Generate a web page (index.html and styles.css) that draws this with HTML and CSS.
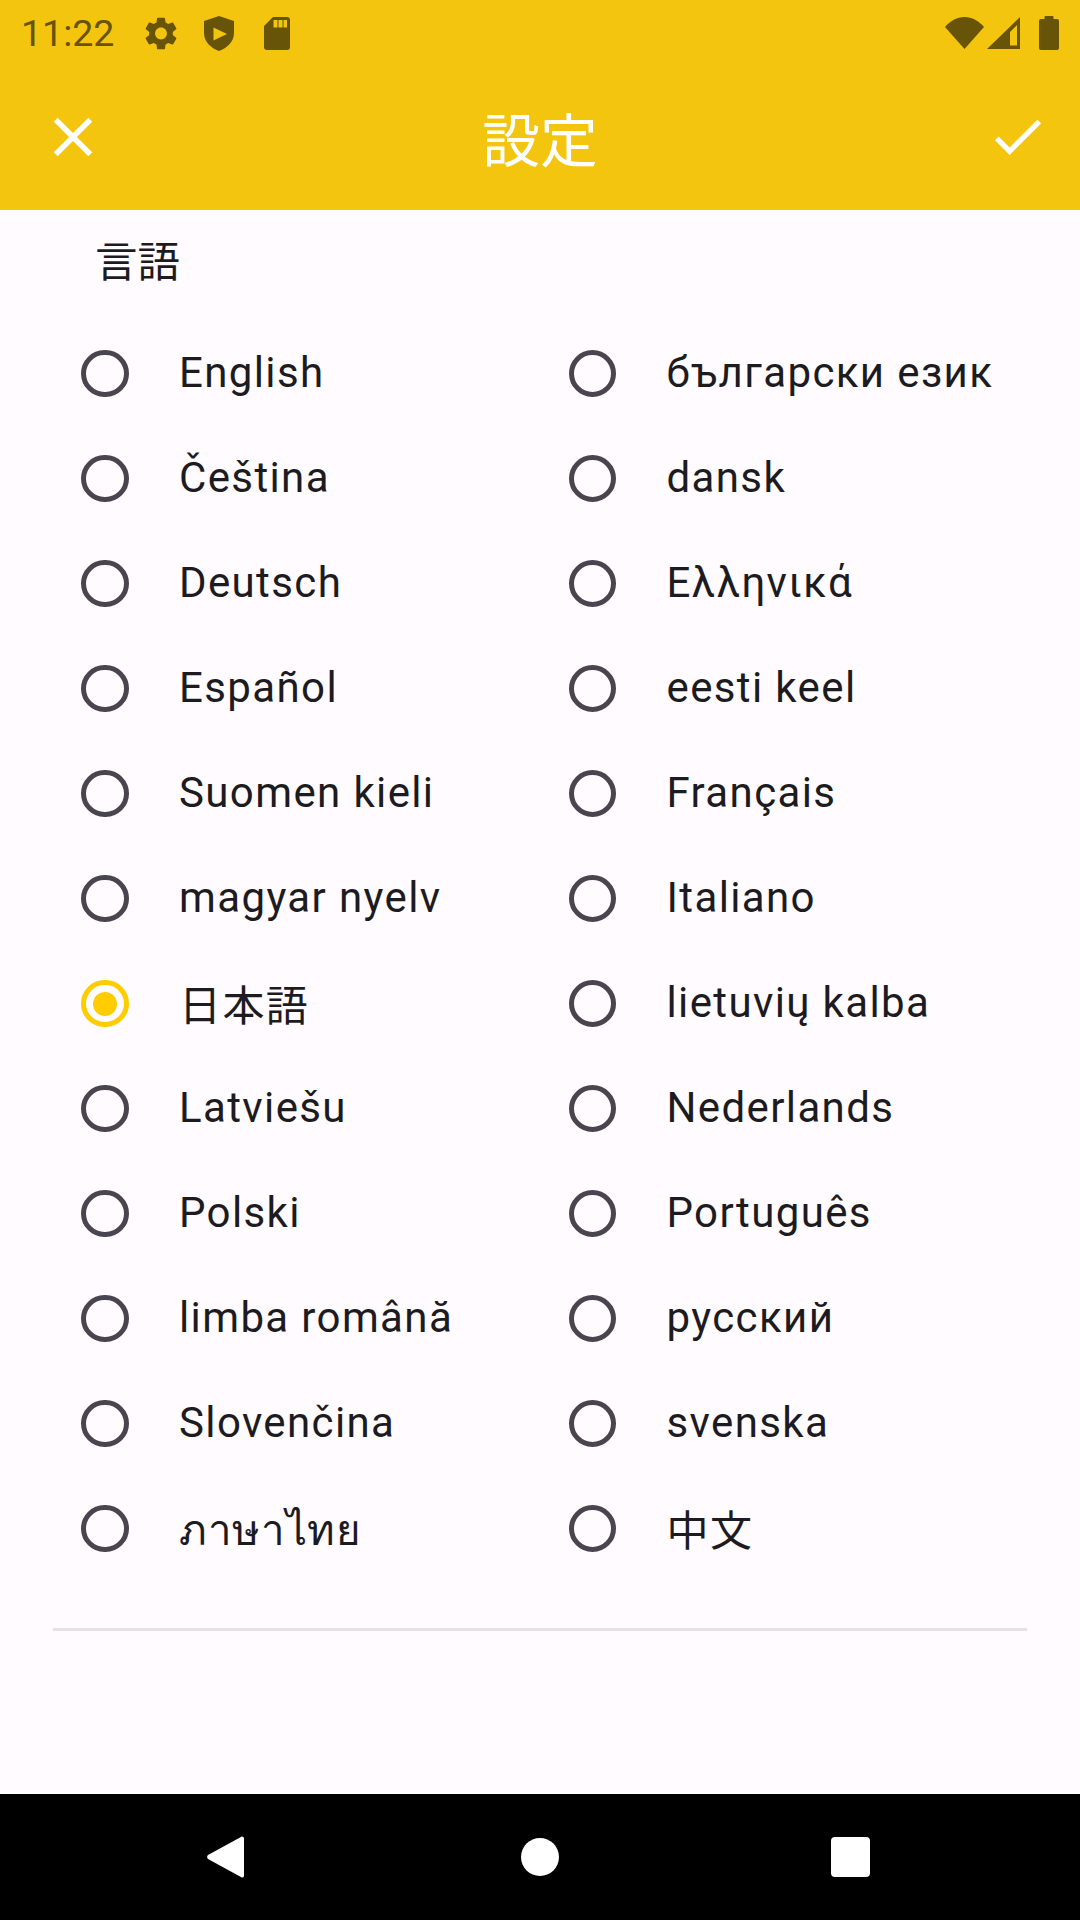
FILE: index.html
```html
<!DOCTYPE html>
<html lang="ja">
<head>
<meta charset="utf-8">
<title>設定</title>
<link rel="stylesheet" href="styles.css">
</head>
<body>
<div class="screen">
  <div class="status">
    <span class="time">11:22</span>
    <svg class="ic-gear" viewBox="2.6 2 18.8 20"><path d="M19.14 12.94c.04-.3.06-.61.06-.94 0-.32-.02-.64-.07-.94l2.03-1.58c.18-.14.23-.41.12-.61l-1.92-3.32c-.12-.22-.37-.29-.59-.22l-2.39.96c-.5-.38-1.03-.7-1.62-.94l-.36-2.54c-.04-.24-.24-.41-.48-.41h-3.84c-.24 0-.43.17-.47.41l-.36 2.54c-.59.24-1.13.57-1.62.94l-2.39-.96c-.22-.08-.47 0-.59.22L2.74 8.87c-.12.21-.08.47.12.61l2.03 1.58c-.05.3-.09.63-.09.94s.02.64.07.94l-2.03 1.58c-.18.14-.23.41-.12.61l1.92 3.32c.12.22.37.29.59.22l2.39-.96c.5.38 1.03.7 1.62.94l.36 2.54c.05.24.24.41.48.41h3.84c.24 0 .44-.17.47-.41l.36-2.54c.59-.24 1.13-.56 1.62-.94l2.39.96c.22.08.47 0 .59-.22l1.92-3.32c.12-.22.07-.47-.12-.61l-2.01-1.58zM12 15.6c-1.98 0-3.6-1.62-3.6-3.6s1.62-3.6 3.6-3.6 3.6 1.62 3.6 3.6-1.62 3.6-3.6 3.6z"/></svg>
    <svg class="ic-shield" viewBox="0 0 30 35"><path fill-rule="evenodd" d="M15 0L30 5V17C30 26 23 32 15 35C7 32 0 26 0 17V5ZM9.5 11.5V24.5L23 18Z"/></svg>
    <svg class="ic-sd" viewBox="0 0 26 33"><path fill-rule="evenodd" d="M9 0H23a3 3 0 0 1 3 3V30a3 3 0 0 1-3 3H3a3 3 0 0 1-3-3V9ZM9.5 3V10.5H13.5V3ZM14.5 3V10.5H18.5V3ZM19.5 3V10.5H23V3Z"/></svg>
    <span class="spacer"></span>
    <svg class="ic-wifi" viewBox="0 0 39 32"><path d="M0 10C5 4 12 0 19.5 0C27 0 34 4 39 10L19.5 32Z"/></svg>
    <svg class="ic-signal" viewBox="0 0 33 32"><path fill-rule="evenodd" d="M0 32L33 0V32ZM23 15V28.5H30V8Z"/></svg>
    <svg class="ic-battery" viewBox="0 0 20 34"><path d="M5.5 3V1a1 1 0 0 1 1-1h7a1 1 0 0 1 1 1V3H18a2 2 0 0 1 2 2V32a2 2 0 0 1-2 2H2a2 2 0 0 1-2-2V5a2 2 0 0 1 2-2Z"/></svg>
  </div>
  <header class="appbar">
    <svg class="bar-icon" viewBox="0 0 24 24"><path d="M19 6.41L17.59 5 12 10.59 6.41 5 5 6.41 10.59 12 5 17.59 6.41 19 12 13.41 17.59 19 19 17.59 13.41 12z"/></svg>
    <h1 class="title">設定</h1>
    <svg class="bar-icon bar-icon-end" viewBox="0 0 24 24"><path d="M9 16.17L4.83 12l-1.42 1.41L9 19 21 7l-1.41-1.41z"/></svg>
  </header>
  <main class="content">
    <h2 class="section">言語</h2>
    <div class="langs">
      <div class="lang"><span class="radio"></span><span class="label">English</span></div>
      <div class="lang"><span class="radio"></span><span class="label">български език</span></div>
      <div class="lang"><span class="radio"></span><span class="label">Čeština</span></div>
      <div class="lang"><span class="radio"></span><span class="label">dansk</span></div>
      <div class="lang"><span class="radio"></span><span class="label">Deutsch</span></div>
      <div class="lang"><span class="radio"></span><span class="label">Ελληνικά</span></div>
      <div class="lang"><span class="radio"></span><span class="label">Español</span></div>
      <div class="lang"><span class="radio"></span><span class="label">eesti keel</span></div>
      <div class="lang"><span class="radio"></span><span class="label">Suomen kieli</span></div>
      <div class="lang"><span class="radio"></span><span class="label">Français</span></div>
      <div class="lang"><span class="radio"></span><span class="label">magyar nyelv</span></div>
      <div class="lang"><span class="radio"></span><span class="label">Italiano</span></div>
      <div class="lang"><span class="radio selected"></span><span class="label label-cjk">日本語</span></div>
      <div class="lang"><span class="radio"></span><span class="label">lietuvių kalba</span></div>
      <div class="lang"><span class="radio"></span><span class="label">Latviešu</span></div>
      <div class="lang"><span class="radio"></span><span class="label">Nederlands</span></div>
      <div class="lang"><span class="radio"></span><span class="label">Polski</span></div>
      <div class="lang"><span class="radio"></span><span class="label">Português</span></div>
      <div class="lang"><span class="radio"></span><span class="label">limba română</span></div>
      <div class="lang"><span class="radio"></span><span class="label">русский</span></div>
      <div class="lang"><span class="radio"></span><span class="label">Slovenčina</span></div>
      <div class="lang"><span class="radio"></span><span class="label">svenska</span></div>
      <div class="lang"><span class="radio"></span><span class="label label-thai">ภาษาไทย</span></div>
      <div class="lang"><span class="radio"></span><span class="label label-cjk">中文</span></div>
    </div>
    <hr class="divider">
  </main>
  <nav class="navbar">
    <svg class="nav-back" viewBox="0 0 37 42"><path d="M35 .5a2 2 0 0 1 2 1.500V40a2 2 0 0 1-2 1.500a2 2 0 0 1-1.500-.7L1 23a3 3 0 0 1 0-4L33.500 1.200A2 2 0 0 1 35 .5Z"/></svg>
    <span class="nav-home"></span>
    <span class="nav-recent"></span>
  </nav>
</div>
</body>
</html>
```

FILE: styles.css
```css
* { box-sizing: border-box; }
html, body { margin: 0; padding: 0; }
body { font-family: Roboto, "Noto Sans CJK JP", "Noto Sans", sans-serif; background: #fffbfe; }
.screen { width: 1080px; height: 1920px; display: flex; flex-direction: column; overflow: hidden; }

.status { height: 66px; background: #f3c50f; color: #675409; display: flex; align-items: center; padding: 0 21px; }
.status svg { fill: #675409; display: block; flex: none; }
.time { font-size: 37.5px; line-height: 66px; width: 124px; flex: none; }
.ic-gear { width: 32px; height: 33px; margin-right: 27px; }
.ic-shield { width: 30px; height: 35px; margin-right: 30px; }
.ic-sd { width: 26px; height: 33px; }
.spacer { flex: 1; }
.ic-wifi { width: 39px; height: 32px; margin-right: 3px; }
.ic-signal { width: 33px; height: 32px; margin-right: 19px; }
.ic-battery { width: 20px; height: 34px; }

.appbar { height: 144px; background: #f3c50f; display: grid; grid-template-columns: 1fr auto 1fr; align-items: center; padding: 0 31px 0 40px; }
.bar-icon { width: 66px; height: 66px; fill: #fff; display: block; margin-bottom: 2px; }
.bar-icon-end { justify-self: end; width: 63px; height: 63px; margin-bottom: 4px; }
.title { margin: 8px 0 0; color: #fff; font-size: 57.750px; font-weight: 400; line-height: 66px; position: relative; left: -4.500px; }

.content { flex: 1; background: #fffbfe; display: flex; flex-direction: column; }
.section { margin: 0; height: 111px; padding: 33px 0 0 95px; font-size: 42.500px; font-weight: 400; line-height: 40px; color: #1c1b1f; }
.langs { display: grid; grid-template-columns: 487.500px 1fr; grid-auto-rows: 105px; padding-left: 81px; }
.lang { display: flex; align-items: center; gap: 50.500px; }
.radio { width: 47.500px; height: 47.500px; border-radius: 50%; border: 5.750px solid #49454f; flex: none; display: flex; align-items: center; justify-content: center; }
.radio.selected { border-color: #ffcc00; }
.radio.selected::after { content: ""; width: 24px; height: 24px; border-radius: 50%; background: #ffcc00; }
.label { font-size: 42px; letter-spacing: 1.375px; color: #1c1b1f; line-height: 50px; white-space: nowrap; padding-bottom: 2px; }
.label-cjk { padding: 7px 0 0; }
.label-thai { padding: 5px 0 0; letter-spacing: 0.700px; }
.divider { margin: 47px 53px 0; border: 0; height: 3px; background: #e7e0e4; }

.navbar { height: 126px; background: #000; display: flex; align-items: center; padding-left: 207px; }
.nav-back { width: 37px; height: 42px; fill: #fff; display: block; margin-right: 277px; }
.nav-home { width: 38px; height: 38px; border-radius: 50%; background: #fff; margin-right: 272px; }
.nav-recent { width: 39px; height: 40px; border-radius: 4px; background: #fff; }
```
